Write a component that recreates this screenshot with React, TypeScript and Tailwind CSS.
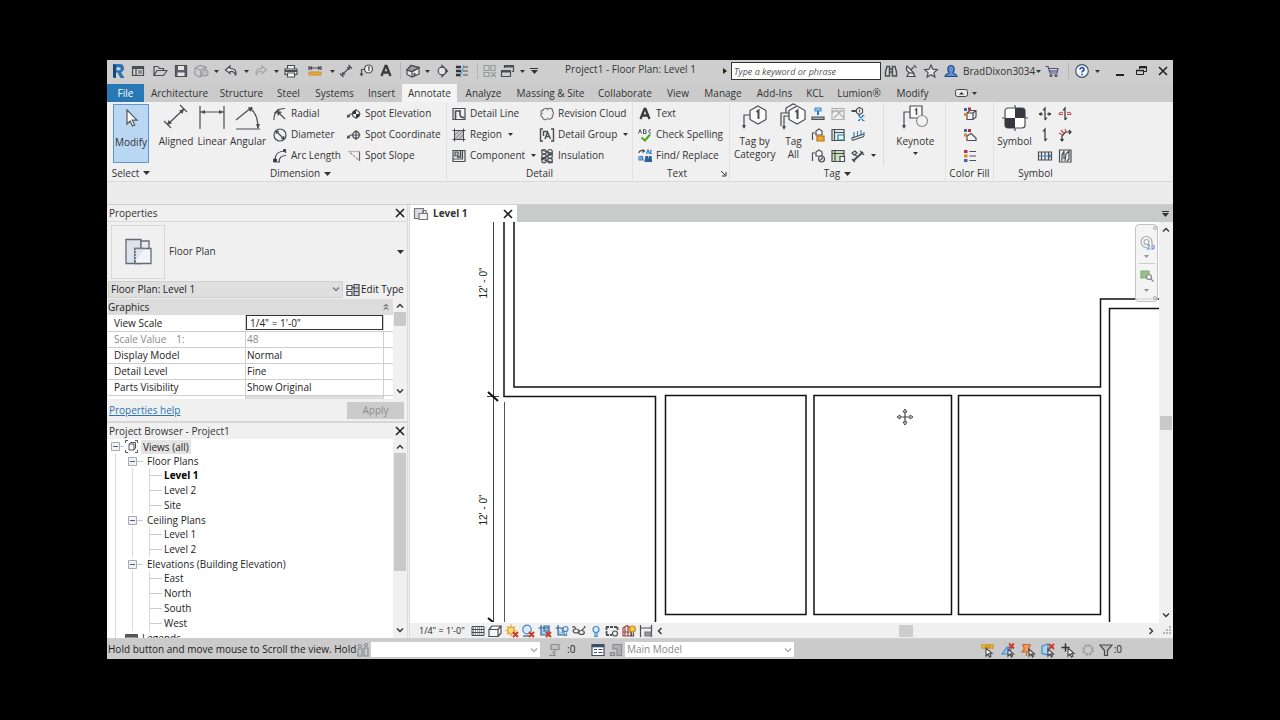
import { ReactNode, useState } from "react";
import clsx from "clsx";

type IconProps = { size?: number; className?: string; children: ReactNode };

const Icon = ({ size = 16, className, children }: IconProps) => (
  <svg
    width={size}
    height={size}
    viewBox={`0 0 ${size} ${size}`}
    fill="none"
    stroke="#4a4d52"
    strokeWidth={1.2}
    aria-hidden="true"
    className={clsx("shrink-0", className)}
  >
    {children}
  </svg>
);

const Caret = ({ big = false }: { big?: boolean }) => (
  <svg width={big ? 7 : 5} height={big ? 4 : 3} viewBox="0 0 6 3" preserveAspectRatio="none" aria-hidden="true" className="shrink-0">
    <path d="M0 0h6L3 3z" fill="#333" />
  </svg>
);

const Chevron = ({ dir, stroke = "#333" }: { dir: "up" | "down" | "left" | "right"; stroke?: string }) => {
  const paths = {
    up: "M1 5.5l3-3 3 3",
    down: "M1 2.5l3 3 3-3",
    left: "M5.5 1l-3 3 3 3",
    right: "M2.5 1l3 3-3 3",
  };
  return (
    <svg width={8} height={8} viewBox="0 0 8 8" fill="none" stroke={stroke} strokeWidth={1.4} aria-hidden="true">
      <path d={paths[dir]} />
    </svg>
  );
};

const Cross = () => (
  <svg width={10} height={10} viewBox="0 0 10 10" stroke="#222" strokeWidth={1.6} aria-hidden="true">
    <path d="M1 1l8 8M9 1L1 9" />
  </svg>
);

const icons: Record<string, ReactNode> = {
  logo: (
    <Icon>
      <path d="M3 1h6.500a4.200 4.200 0 0 1 1.500 8.200L14.500 15h-4L7.500 9.500H6V15H3z" fill="#2a73b4" stroke="none" />
      <path d="M3 1l3 1.500V15L3 13.500z" fill="#16487e" stroke="none" />
      <path d="M6.500 4.300h2.700a1.500 1.500 0 0 1 0 3H6.500z" fill="#cfd6dc" stroke="none" />
    </Icon>
  ),
  window: (
    <Icon>
      <path d="M2.500 3.500h11v9h-11zM2.500 5.500h11M6 5.500v7M8 8h4M8 10h4" />
      <path d="M3 4.500h10" strokeWidth={2} />
    </Icon>
  ),
  open: (
    <Icon>
      <path d="M2 12.500v-9h4l1.500 2h4v2M2 12.500l3-5h10l-3.500 5z" />
    </Icon>
  ),
  save: (
    <Icon>
      <path d="M2.500 2.500h11v11h-11z" fill="#5b6069" />
      <path d="M5 3h6v4H5zM4.500 9.500h7V13h-7z" fill="#e6e6e6" stroke="none" />
    </Icon>
  ),
  sync: (
    <Icon className="opacity-40">
      <path d="M2 5l5-2.500L13 4v7l-6 3-5-2.500zM2 5l5.500 2L13 4M7.500 7v7" fill="#d2d2d2" />
      <circle cx="12" cy="10" r="3" fill="#aaa" />
    </Icon>
  ),
  undo: (
    <Icon>
      <path d="M7 3L2.500 7 7 10.500V8.500c3.500-.5 5 .5 5.500 4 1.500-4 0-7-5.500-7z" fill="#e8e8e8" />
    </Icon>
  ),
  redo: (
    <Icon className="opacity-30">
      <path d="M9 3l4.500 4L9 10.500V8.500c-3.500-.5-5 .5-5.500 4-1.500-4 0-7 5.500-7z" />
    </Icon>
  ),
  print: (
    <Icon>
      <path d="M4.500 6V2.500h7V6M2 6h12v5.500H2z" fill="#eee" />
      <path d="M2 8h12" strokeWidth={2} />
      <path d="M4.500 10h7v4h-7z" fill="#fff" />
    </Icon>
  ),
  measure: (
    <Icon>
      <path d="M2 5h12M2 3v4M14 3v4M5 3.500L3 5l2 1.500M11 3.500L13 5l-2 1.500" />
      <path d="M2 9h12v3H2z" fill="#e8ac3b" stroke="#c58718" strokeWidth={0.8} />
    </Icon>
  ),
  dim: (
    <Icon>
      <path d="M4 12l8-8M2 10.500l3.500 3.500M10.500 2L14 5.500" />
      <path d="M4 12l.5-3 2.500 2.500zM12 4l-3 .5L11.500 7z" fill="#4a4d52" strokeWidth={0.5} />
    </Icon>
  ),
  tag: (
    <Icon>
      <circle cx="10.500" cy="6" r="4" fill="#eee" />
      <path d="M10 4.500l1-.5v4M6.500 6.500h-3v6M2 10.500l1.500 2 1.500-2" />
    </Icon>
  ),
  text: (
    <Icon>
      <path d="M3.500 13L7.500 3h1l4 10M5 9.500h6" strokeWidth={2.3} stroke="#3b3b3b" />
    </Icon>
  ),
  house: (
    <Icon>
      <path d="M2 7l4-4.500 8 2v6.500L7 14l-5-2.500zM2 7l5 1.500L14 5M7 8.500V14" fill="#e7e7e7" />
      <path d="M2 7l4-4.500 8 2L7 8.500z" fill="#9a9da3" />
      <path d="M9.500 10v3" strokeWidth={2} />
    </Icon>
  ),
  section: (
    <Icon>
      <path d="M8 2.500L13.500 8 8 13.500z" fill="#4a4d52" />
      <circle cx="8" cy="8" r="3.800" fill="#e4e4e4" />
    </Icon>
  ),
  thin: (
    <Icon>
      <path d="M2 4h5M2 8h5M2 12h5" strokeWidth={2.4} stroke="#333" />
      <path d="M9 4h5M9 8h5M9 12h5" />
      <path d="M10 2L6 14" stroke="#4a9ad4" />
    </Icon>
  ),
  closeHidden: (
    <Icon className="opacity-40">
      <path d="M2 2.500h5v5H2zM9 2.500h4v5H9zM2 9.500h5v4H2zM9 9l5 5M14 9l-5 5" />
    </Icon>
  ),
  switchWin: (
    <Icon>
      <path d="M4.500 5V2.500h9v6H12M1.500 7.500h9v6h-9z" />
      <path d="M1.500 8.500h9M4.500 3.500h9" strokeWidth={1.8} />
    </Icon>
  ),
  binoculars: (
    <Icon>
      <path d="M4 3.500h2.500V13h-4V9zM12 3.500H9.500V13h4V9zM6.500 6h3v3h-3z" fill="#d8d8d8" strokeWidth={1.5} />
    </Icon>
  ),
  dish: (
    <Icon>
      <path d="M4 3c-2 4 1 8 7 7zM8 6.500l3-2.500M10.500 2.500a2.500 2.500 0 0 1 2.500 2.500M6 9.500l-2 4h8l-2-3.500" fill="#e2e2e2" />
    </Icon>
  ),
  star: (
    <Icon>
      <path d="M8 2l1.800 4.200 4.500.4-3.400 3 1 4.400L8 11.700 4.100 14l1-4.400-3.400-3 4.500-.4z" fill="#e6e6e6" />
    </Icon>
  ),
  user: (
    <Icon>
      <path d="M2 13.500c0-3 4-2.500 4-4C4 7 4.500 2.500 8 2.500S12 7 10 9.500c0 1.500 4 1 4 4z" fill="#5d8fdd" stroke="#28457f" />
    </Icon>
  ),
  cart: (
    <Icon>
      <path d="M1.500 3.500H4L6 10h7l1-4.500H4.500" fill="#d5d8e4" stroke="#4d5576" />
      <circle cx="7" cy="12.500" r="1" />
      <circle cx="12" cy="12.500" r="1" />
      <path d="M6 8h7" stroke="#4d5576" />
    </Icon>
  ),
  help: (
    <Icon>
      <circle cx="8" cy="8" r="6.300" fill="#f6f8fc" stroke="#45536b" />
      <path d="M6 6.500c0-2.600 4-2.600 4 0 0 1.500-2 1.500-2 3M8 10.800v1.400" stroke="#2457b8" strokeWidth={1.7} />
    </Icon>
  ),
  radial: (
    <Icon>
      <path d="M2 14C1.500 7 6 2.500 13 2.500M5.500 5.500L13 13" />
      <path d="M5 5l1 4.500L9.500 6z" fill="#4a4d52" strokeWidth={0.5} />
      <path d="M2.500 7.500L7 3" strokeWidth={1.6} />
    </Icon>
  ),
  diameter: (
    <Icon>
      <circle cx="8" cy="8" r="6" />
      <path d="M4 4l8 8" />
      <path d="M4 4v3l3-3zM12 12V9l-3 3z" fill="#4a4d52" strokeWidth={0.5} />
    </Icon>
  ),
  arc: (
    <Icon>
      <path d="M3 12C3 6.500 6.500 3 13 3M7 14c0-4 2.500-6.500 7-6.500M8 14H5M13.500 1v4" />
      <path d="M1.500 11h3v3h-3zM11.500 1.500h2v2h-2z" fill="#333" strokeWidth={1} />
    </Icon>
  ),
  spotElev: (
    <Icon>
      <path d="M1.500 11l3-3h10M2 8.500L1.500 11l2.500-.5M10 3v10" />
      <circle cx="10" cy="8" r="3.500" fill="#fff" />
      <path d="M10 8V4.500A3.500 3.500 0 0 0 6.500 8zM10 8v3.500A3.500 3.500 0 0 0 13.500 8z" fill="#333" stroke="none" />
    </Icon>
  ),
  spotCoord: (
    <Icon>
      <path d="M1.500 11l3-3h10M2 8.500L1.500 11l2.500-.5M10 3v10" />
      <circle cx="10" cy="8" r="3.300" />
    </Icon>
  ),
  spotSlope: (
    <Icon>
      <path d="M2 3.500h11.500" stroke="#b5b5b5" />
      <path d="M13.500 3.500v9.500" stroke="#666" />
      <path d="M4 4.500l9 8" stroke="#999" strokeDasharray="3 1" />
    </Icon>
  ),
  detailLine: (
    <Icon>
      <path d="M2 2.500h12v11H2z" />
      <path d="M4.500 4.500v9M4.500 5h4M9 4v4c0 2 1 4 4.500 3.500" strokeWidth={1.6} />
    </Icon>
  ),
  region: (
    <Icon>
      <path d="M3.500 4h9v8h-9z" fill="#c6c6c6" stroke="none" />
      <path d="M3.500 1.500v13M12.500 1.500v13M1.500 3.500h13M1.500 12.500h13" strokeWidth={1} />
      <path d="M4 8l4-4M4 12l8-8M8 12l4-4" stroke="#8a8a8a" strokeWidth={1} />
    </Icon>
  ),
  component: (
    <Icon>
      <path d="M2 2.500h12v11H2zM2 11h9.500V3" />
      <path d="M4 4h3v4H4z" fill="#ccc" />
      <path d="M9.500 3v6H6" strokeWidth={1.6} />
    </Icon>
  ),
  cloud: (
    <Icon>
      <path d="M4 4.500C4 2 8 2 8.500 3.500 10 1.500 14 2 13.500 5c1.500 1.500 1 4 0 4.500.5 3-3 4.500-5 3C7 14.500 3.500 14 3.500 11 1 10.500 1.500 8 3 7.500 1 6.500 2 4 4 4.500z" stroke="#777" />
    </Icon>
  ),
  group: (
    <Icon>
      <path d="M4 2H1.500v12H4M12 2h2.500v12H12M4.500 9V4.500H8M6 12l2.500-7 3 7M7 9.500h3.500" strokeWidth={1.4} />
    </Icon>
  ),
  insulation: (
    <Icon>
      <circle cx="5" cy="3.800" r="2.300" />
      <circle cx="11" cy="3.800" r="2.300" />
      <circle cx="5" cy="8.300" r="2.300" />
      <circle cx="11" cy="8.300" r="2.300" />
      <circle cx="5" cy="12.500" r="2.300" />
      <circle cx="11" cy="12.500" r="2.300" />
      <path d="M2 2l12 3.500M2 10.500L14 6M2 11l12 3.500" />
    </Icon>
  ),
  spelling: (
    <Icon>
      <path d="M1.500 6.500l1.500-4 1.500 4M6.500 2.500v4H9c1.500-2-2.500-2 0-2 1-2-2.500-2-2.500-2M14 3c-3-1.500-3 4 0 3" strokeWidth={1} />
      <path d="M4.500 10.500L8 13.500l5-6" stroke="#53a52c" strokeWidth={2} />
    </Icon>
  ),
  find: (
    <Icon>
      <path d="M2 5c0-2 2-3 5-2M5.500 1.500l2 1.500-2 1.500" />
      <path d="M9.500 6l1.500-4 1.500 4M15 2.500h-1.500v3H15M2 12V9l2-.5V12zM5.500 8v4h1.500" stroke="#3e80c4" />
      <path d="M9 8.500h1.500l.5 5H8zM12.500 8.500H14l.5 5h-3z" fill="#31619b" stroke="#31619b" />
    </Icon>
  ),
  tagPin: (
    <Icon>
      <path d="M5 2h6v3H5z" fill="#8cc4ef" stroke="#4b93ca" />
      <path d="M8 5v4" stroke="#2b77ba" strokeWidth={2} />
      <path d="M2 11h12v2.500H2z" fill="#aaa" />
    </Icon>
  ),
  tagOff: (
    <Icon className="opacity-40">
      <path d="M2 2.500h12v11H2zM2 7l4-3 8 8M4 12l8-8M2 5h12" />
    </Icon>
  ),
  tagLoad: (
    <Icon>
      <path d="M1.500 5H6" strokeWidth={2} />
      <path d="M9.500 1.500l3 1.800v3.400l-3 1.800-3-1.800V3.300z" fill="#fff" />
      <path d="M9.500 3.500v3" />
      <path d="M9 10l4 4M13 10l-4 4M8 9.500h2M12 9.500h2.500M8 14.500h2M12 14.500h2.500" stroke="#2c86cc" />
    </Icon>
  ),
  tagMulti: (
    <Icon>
      <path d="M5 6H2.500v7M9 2l3 2v4H6V4z" fill="#fff" />
      <path d="M7 9h7v5H7z" fill="#f0a534" stroke="#b87617" />
    </Icon>
  ),
  tagWin: (
    <Icon>
      <path d="M2 2.500h12v11H2zM4.500 2.500v11M5 5.500h9" fill="#e1eeee" />
      <path d="M8 8h6v5H8z" fill="#fff" stroke="#237899" />
    </Icon>
  ),
  tagBars: (
    <Icon>
      <path d="M4 11V5M7.500 9.500V4M11 8V3M2 13v-3M14 9V5" stroke="#4a7eb8" />
      <path d="M2 13.500L14 9.500M2 11l12-4" />
    </Icon>
  ),
  tagCircle: (
    <Icon>
      <path d="M5 5H2.500v8M9 2l3 2v4H6V4z" fill="#fff" />
      <circle cx="11.500" cy="11" r="3" fill="#eee" />
      <path d="M10 12.500l3-3" />
    </Icon>
  ),
  tagRoom: (
    <Icon>
      <path d="M2 2.500h12v11H2zM5 2.500v11M2 5.500h12" fill="#cbe1b7" />
      <path d="M10 8.500h4.500v5H10z" fill="#fff" />
    </Icon>
  ),
  tagPath: (
    <Icon>
      <path d="M3 13L13 4" strokeWidth={2} />
      <path d="M2 5l3-2 2 2-3 2zM2 11l3 3M10 3l4 4M5 7l2 1" />
    </Icon>
  ),
  fillBox: (
    <Icon>
      <path d="M5 7l3-2.500h6V11l-3 2.500H5zM5 7h6v6.500M11 7l3-2.500" fill="#f3f3f3" />
      <path d="M2 2h3v3H2z" fill="#3a66b1" stroke="none" />
      <path d="M6 1.500h3v3H6z" fill="#b23148" stroke="none" />
      <path d="M2 7h3v3H2z" fill="#e48526" stroke="none" />
    </Icon>
  ),
  fillDuct: (
    <Icon>
      <path d="M5 9l4-2.500L14 11v2.500H5z" fill="#f3f3f3" />
      <path d="M2 2h3v3H2z" fill="#3a66b1" stroke="none" />
      <path d="M6 2h3v3H6z" fill="#b23148" stroke="none" />
      <path d="M2 6.500h3v3H2z" fill="#e48526" stroke="none" />
    </Icon>
  ),
  fillLegend: (
    <Icon>
      <path d="M7.500 3.500H14M7.500 8H14M7.500 12.500H14" />
      <path d="M2 2h3.500v3H2z" fill="#b23148" stroke="none" />
      <path d="M2 6.500h3.500v3H2z" fill="#e48526" stroke="none" />
      <path d="M2 11h3.500v3H2z" fill="#3a66b1" stroke="none" />
    </Icon>
  ),
  symSpan: (
    <Icon>
      <path d="M2 8h4M10 8h4M8 14V2L6 4.500M8 14l2-2.500" stroke="#333" />
      <path d="M4.500 6v4L1.500 8zM11.500 6v4l3-2z" fill="#333" stroke="none" />
    </Icon>
  ),
  symBeam: (
    <Icon>
      <path d="M8 14V2L6 4.500M8 14l2-2.500" stroke="#333" />
      <path d="M6 7c-2-1.500-4-.5-4 1.500M10 7c2-1.500 4-.5 4 1.500M2 8.500h4M10 8.500h4" stroke="#c94b50" />
    </Icon>
  ),
  symPath: (
    <Icon>
      <path d="M8 14V2L6 4.500M8 14l2-2.500" stroke="#333" />
    </Icon>
  ),
  symRebar: (
    <Icon>
      <path d="M5 14V9l3.500-4H14M12 3l2 2-2 2M3.500 12L5 14l1.500-2" stroke="#333" />
      <path d="M2 6l4 2M4 3l3 3.500M8 2l1 3" stroke="#c94b50" />
    </Icon>
  ),
  symFabric: (
    <Icon>
      <path d="M1.500 4h13v8h-13zM4.500 4v8M8 4v8M11.500 4v8" />
      <path d="M2 8h12M12 6.500L14 8l-2 1.500" stroke="#2d86b9" />
    </Icon>
  ),
  symSheet: (
    <Icon>
      <path d="M2.500 2h11.500v12H2.500zM5 13V7l2-4M8 13l1-7 3-3v8l-2 2M7 3v8" />
    </Icon>
  ),
  aligned: (
    <Icon size={28}>
      <path d="M5 22L22 6M2 18l7 7M18 2l7 7" />
      <path d="M5 22l1.500-5 3.500 3.500zM22 6l-1.500 5L17 7.500z" fill="#4a4d52" stroke="none" />
    </Icon>
  ),
  linear: (
    <Icon size={28}>
      <path d="M2 3v23M26 3v23M2 9h24" />
      <path d="M2.500 9L7 7v4zM25.500 9L21 7v4z" fill="#4a4d52" stroke="none" />
    </Icon>
  ),
  angular: (
    <Icon size={28}>
      <path d="M2 17L18 4M2 26h24M16 5c5 4 8 11 8 20" />
      <path d="M14 4l5 1-3 4zM24 26l-2-5h4z" fill="#4a4d52" stroke="none" />
    </Icon>
  ),
  tagCategory: (
    <Icon size={28}>
      <path d="M9 12H3v13" />
      <path d="M1 22h4l-2 4z" fill="#4a4d52" stroke="none" />
      <path d="M17 3l8 4.500v9L17 21l-8-4.500v-9z" fill="#fafafa" />
      <path d="M15.500 9l2-1.500V16" strokeWidth={2} />
    </Icon>
  ),
  tagAll: (
    <Icon size={28}>
      <path d="M10 10H2v13M11 13H5v12M17 2l-3-1-7 4v5" />
      <path d="M3 23h4l-2 4z" fill="#4a4d52" stroke="none" />
      <path d="M18 3l8 4.500v9L18 21l-8-4.500v-9z" fill="#fafafa" />
      <path d="M16.500 9l2-1.500V16" strokeWidth={2} />
    </Icon>
  ),
  keynote: (
    <Icon size={28}>
      <path d="M9 9H3v16" />
      <path d="M1 22h4l-2 4z" fill="#4a4d52" stroke="none" />
      <path d="M9 3h12v12H9z" fill="#fafafa" />
      <path d="M14 7l1.500-1v6" strokeWidth={1.5} />
      <circle cx="21" cy="18" r="5.500" fill="#f1f1f1" stroke="#8a8a8a" />
    </Icon>
  ),
  symbol: (
    <Icon size={28}>
      <path d="M14 2v26M1 15h26" />
      <rect x="4" y="5" width="20" height="20" rx="3" fill="#fff" />
      <path d="M14 5h7a3 3 0 0 1 3 3v7H14zM14 15v10H7a3 3 0 0 1-3-3v-7z" fill="#36393f" stroke="none" />
    </Icon>
  ),
  cursor: (
    <Icon size={24}>
      <path d="M8 5v14l3.200-3 2.300 5 2.200-1-2.300-4.800H18z" fill="#fff" stroke="#555" />
    </Icon>
  ),
  sheets: (
    <Icon>
      <path d="M1.500 2.500h9v10h-9z" fill="#d8dde5" stroke="#777" />
      <path d="M6 7.500h8.500v6H6z" fill="#f0f3f7" stroke="#777" />
      <path d="M10 7V4.500h3V7" stroke="#777" />
    </Icon>
  ),
  editType: (
    <Icon>
      <path d="M2 3.500h5v4H2zM2 9.500h5v4H2zM7 5.500h2" fill="#eef3f8" />
      <path d="M9 2.500h5v11H9zM9 6h5M9 9.500h5" fill="#c5d5e6" />
    </Icon>
  ),
  mesh: (
    <Icon>
      <path d="M2 3.500h12v9H2zM2 6.500h12M2 9.500h12" strokeWidth={1} />
      <path d="M3 5h10M3 8h10M3 11h10" strokeDasharray="1 1" strokeWidth={1.5} stroke="#888" />
    </Icon>
  ),
  box: (
    <Icon>
      <path d="M2 6.500h9v7H2zM2 6.500L5 3h9l-3 3.500M14 3v7l-3 3.500" fill="#f6f6f6" />
    </Icon>
  ),
  sun: (
    <Icon>
      <path d="M7 1.500v12M1.500 7.500h11M3 3.500l8 8M11 3.500l-8 8" stroke="#e0a42b" />
      <circle cx="7" cy="7.500" r="3.300" fill="#fbdc7a" stroke="#e0a42b" />
      <path d="M9 9l5 5M14 9l-5 5" stroke="#cc3929" strokeWidth={2} />
    </Icon>
  ),
  shadow: (
    <Icon>
      <circle cx="7" cy="6.500" r="4.300" fill="#d9ebf8" stroke="#4c88bd" />
      <path d="M3 13h6" />
      <path d="M9 9l5 5M14 9l-5 5" stroke="#cc3929" strokeWidth={2} />
    </Icon>
  ),
  crop: (
    <Icon>
      <path d="M4 2v10h9M1.500 5H12v5M7 3h5v5H7z" fill="#a9cbe8" stroke="#316799" />
      <path d="M9 9l5 5M14 9l-5 5" stroke="#cc3929" strokeWidth={2} />
    </Icon>
  ),
  cropShow: (
    <Icon>
      <path d="M4 2v10h6M1.500 5H9v5" fill="#a9cbe8" stroke="#316799" />
      <circle cx="11.500" cy="6" r="2.500" fill="#d9ebf8" stroke="#4c88bd" />
      <path d="M10.500 9.500v3h2v-3" stroke="#4c88bd" />
    </Icon>
  ),
  glasses: (
    <Icon>
      <path d="M1.500 4.500c1-2 3 0 3 1.500M11 7c2-2 3-2 3-4" />
      <ellipse cx="5" cy="8" rx="2.800" ry="2" />
      <ellipse cx="10.500" cy="9.500" rx="2.800" ry="2" />
    </Icon>
  ),
  bulb: (
    <Icon>
      <circle cx="8" cy="6.500" r="3" fill="#d9ebf8" stroke="#3b88c8" />
      <path d="M7 9.500v4h2v-4" stroke="#3b88c8" />
    </Icon>
  ),
  temp: (
    <Icon>
      <path d="M2 4h12M2 12h6M2.500 4v8M13.500 4v3" strokeWidth={1.8} strokeDasharray="3 1" />
      <circle cx="11" cy="10.500" r="2.500" />
    </Icon>
  ),
  analytic: (
    <Icon>
      <path d="M2 5l4-2.500L10 5v8H2zM4 3v10M7 3v10M2 9h8" stroke="#9a4a42" />
      <circle cx="11.500" cy="6" r="3" fill="#f6c845" stroke="#c58d1c" />
      <path d="M10.500 9.500V13h2V9.500" />
    </Icon>
  ),
  constraint: (
    <Icon>
      <path d="M2.500 2v12M13.500 2v12M2.500 5h11" />
      <path d="M7 9h6v4H7z" fill="#999" stroke="#777" />
    </Icon>
  ),
  people: (
    <Icon className="opacity-50">
      <path d="M3 7h4v7H3zM9 6h4v8H9z" fill="#c5c5c5" />
      <circle cx="5" cy="4" r="1.500" />
      <circle cx="11" cy="3" r="1.500" />
    </Icon>
  ),
  press: (
    <Icon className="opacity-50">
      <path d="M5 2.500h8v5H5zM9 7.500v3M3 13.500h6l-2-4" fill="#bbb" />
    </Icon>
  ),
  dialog: (
    <Icon>
      <path d="M2 2.500h12v11H2z" fill="#fff" />
      <path d="M2 4h12" strokeWidth={2.6} stroke="#345071" />
      <path d="M4 7.500h3M4 10.500h3M8.500 7.500h4M8.500 10.500h4" stroke="#345071" />
    </Icon>
  ),
  option: (
    <Icon className="opacity-50">
      <path d="M5 2.500h8.500v11H9V7H5zM2.500 10.500h4v3h-4z" fill="#999" />
    </Icon>
  ),
  selLinks: (
    <Icon>
      <path d="M2 3h5v3H2zM8 3h5v3H8zM5 4.500h6" stroke="#d99d1b" strokeWidth={1.5} />
      <path d="M6 6v8l2-2 1.500 3 1.500-1-1.500-2.500H12z" fill="#fff" />
    </Icon>
  ),
  selUnder: (
    <Icon>
      <path d="M2 12l5-7h5l-3 7zM2 12h6" fill="#9fcdec" stroke="#3b88c8" />
      <path d="M9 1.500l5 5M14 1.500l-5 5" stroke="#cc3929" strokeWidth={1.8} />
      <path d="M8 7v7l2-2 1.500 3 1-1-1-2h2z" fill="#fff" />
    </Icon>
  ),
  selPin: (
    <Icon>
      <path d="M3 2.500h7v2L9 5v3l2 2H2l2-2V5l-1-.5zM6.500 10v4" fill="#ed9d61" stroke="#c76a27" />
      <path d="M9 7v7l2-2 1.500 3 1-1-1-2h2z" fill="#fff" />
    </Icon>
  ),
  selFace: (
    <Icon>
      <path d="M2 4l6-2v11l-6-1.500z" fill="#aad3ee" stroke="#3b88c8" />
      <path d="M9 2l5 5M14 2L9 7" stroke="#cc3929" strokeWidth={1.8} />
      <path d="M8 7v7l2-2 1.500 3 1-1-1-2h2z" fill="#fff" />
    </Icon>
  ),
  selDrag: (
    <Icon>
      <path d="M5.500 1.500v8M1.500 5.500h8" stroke="#333" strokeWidth={1.5} />
      <path d="M8 6v8l2-2 1.500 3 1.500-1-1.500-2.500H14z" fill="#fff" />
    </Icon>
  ),
  ring: (
    <Icon>
      <circle cx="8" cy="8" r="4.500" stroke="#9d9d9d" strokeWidth={2.4} strokeDasharray="2.5 1" />
    </Icon>
  ),
  filter: (
    <Icon>
      <path d="M2 3h12l-4.500 5.500v5h-3v-5z" fill="#bbb" />
    </Icon>
  ),
};

// quick access toolbar, left to right
const quickAccess: [string, string][] = [
  ["logo", "w-5"],
  ["window", "w-5"],
  ["open", "w-6"],
  ["save", "w-[18px]"],
  ["sync", "w-[22px]"],
  ["caret", "w-2"],
  ["undo", "w-[22px]"],
  ["caret", "w-2"],
  ["redo", "w-[22px]"],
  ["caret", "w-2"],
  ["print", "w-[22px]"],
  ["measure", "w-[26px]"],
  ["caret", "w-2"],
  ["dim", "w-5"],
  ["tag", "w-5"],
  ["text", "w-5"],
  ["rule", "w-2"],
  ["house", "w-[18px]"],
  ["caret", "w-[10px]"],
  ["section", "w-5"],
  ["thin", "w-5"],
  ["rule", "w-[10px]"],
  ["closeHidden", "w-4"],
  ["switchWin", "w-5"],
  ["caret", "w-2"],
];

const tabs: [string, string][] = [
  ["Architecture", "w-[69px]"],
  ["Structure", "w-[55px]"],
  ["Steel", "w-[39px]"],
  ["Systems", "w-[53px]"],
  ["Insert", "w-[41px]"],
  ["Annotate", "w-[55px]"],
  ["Analyze", "w-[53px]"],
  ["Massing & Site", "w-[81px]"],
  ["Collaborate", "w-[68px]"],
  ["View", "w-[38px]"],
  ["Manage", "w-[52px]"],
  ["Add-Ins", "w-[51px]"],
  ["KCL", "w-[30px]"],
  ["Lumion®", "w-[58px]"],
  ["Modify", "w-[49px]"],
];

const properties = [
  { name: "Display Model", value: "Normal" },
  { name: "Detail Level", value: "Fine" },
  { name: "Parts Visibility", value: "Show Original" },
];

const views = [
  { title: "Floor Plans", items: ["Level 1", "Level 2", "Site"] },
  { title: "Ceiling Plans", items: ["Level 1", "Level 2"] },
  { title: "Elevations (Building Elevation)", items: ["East", "North", "South", "West"] },
];

const viewControls = ["mesh", "box", "sun", "shadow", "crop", "cropShow", "glasses", "bulb", "temp", "analytic", "constraint"];

const selectionTools = ["selLinks", "selUnder", "selPin", "selFace", "selDrag", "ring"];

const Rule = () => <span className="h-4 w-px bg-[#b5b5b5]" />;

const SmallButton = ({ icon, label, caret = false }: { icon: string; label: string; caret?: boolean }) => (
  <button type="button" className="flex h-[21px] items-center whitespace-nowrap">
    {icons[icon]}
    <span className="ml-[3px]">{label}</span>
    {caret && (
      <span className="ml-[6px]">
        <Caret />
      </span>
    )}
  </button>
);

const LargeButton = ({ icon, label, caret = false, className }: { icon: string; label: string; caret?: boolean; className: string }) => (
  <button type="button" className={clsx("flex flex-col items-center", className)}>
    {icons[icon]}
    <span className="mt-1 leading-[13px]">{label}</span>
    {caret && (
      <span className="mt-1">
        <Caret />
      </span>
    )}
  </button>
);

const IconButton = ({ icon, className = "h-[21px] w-5" }: { icon: string; className?: string }) => (
  <button type="button" aria-label={icon} className={clsx("flex items-center justify-center", className)}>
    {icons[icon]}
  </button>
);

type PanelProps = { title: string; caret?: boolean; launcher?: boolean; last?: boolean; className: string; children: ReactNode };

const Panel = ({ title, caret = false, launcher = false, last = false, className, children }: PanelProps) => (
  <section className={clsx("flex shrink-0 flex-col", !last && "border-r border-[#e2e2e2]", className)}>
    <div className="flex h-[63px]">{children}</div>
    <div className="flex h-4 items-center">
      <h2 className="flex flex-1 items-center justify-center gap-1 whitespace-nowrap">
        {title}
        {caret && <Caret big />}
      </h2>
      {launcher && (
        <button type="button" aria-label={`${title} settings`} className="w-2">
          <svg width={6} height={6} viewBox="0 0 6 6" fill="none" stroke="#333" aria-hidden="true">
            <path d="M0 0l4 4M5 1v4H1" />
          </svg>
        </button>
      )}
    </div>
  </section>
);

const TitleBar = () => (
  <header className="flex h-6 items-center bg-[#cecece] pb-[2px] pl-px">
    {quickAccess.map(([icon, width], index) => {
      if (icon === "rule")
        return (
          <span key={index} className={clsx("flex shrink-0 justify-center", width)}>
            <Rule />
          </span>
        );
      return (
        <button key={index} type="button" aria-label={icon} className={clsx("flex shrink-0 items-center justify-center", width)}>
          {icon === "caret" ? <Caret /> : icons[icon]}
        </button>
      );
    })}
    <button type="button" aria-label="Customize toolbar" className="flex w-4 flex-col items-center gap-px">
      <span className="h-px w-2 bg-[#333]" />
      <Caret big />
    </button>
    <h1 className="flex-1 pb-1 text-center leading-4">Project1 - Floor Plan: Level 1</h1>
    <span className="flex w-3 justify-center">
      <svg width={4} height={6} viewBox="0 0 4 6" aria-hidden="true">
        <path d="M0 0l4 3-4 3z" fill="#222" />
      </svg>
    </span>
    <input
      aria-label="Search"
      placeholder="Type a keyword or phrase"
      className="h-[18px] w-[150px] border border-[#333] bg-white px-[2px] text-[9px] italic outline-none placeholder:text-[#555]"
    />
    <IconButton icon="binoculars" />
    <IconButton icon="dish" />
    <IconButton icon="star" />
    <button type="button" className="flex items-center">
      <span className="flex w-5 justify-center">{icons.user}</span>
      <span className="w-[75px] pl-[2px] text-left">BradDixon3034</span>
      <Caret />
    </button>
    <IconButton icon="cart" className="w-[22px]" />
    <span className="flex w-[10px] justify-center">
      <Rule />
    </span>
    <IconButton icon="help" className="w-[18px]" />
    <span className="mr-[6px] flex w-3 justify-center">
      <Caret />
    </span>
    <button type="button" aria-label="Minimize" className="flex w-[22px] justify-center pt-2">
      <span className="h-[2px] w-2 bg-[#222]" />
    </button>
    <button type="button" aria-label="Restore" className="flex w-[21px] justify-center">
      <svg width={11} height={10} viewBox="0 0 11 10" fill="none" stroke="#222" aria-hidden="true">
        <path d="M3.500 3V.5h7v5H8M.5 4.500h7v4h-7z" />
        <path d="M3 1.500h8M0 4.500h8" strokeWidth={1.5} />
      </svg>
    </button>
    <button type="button" aria-label="Close" className="flex w-[21px] justify-center">
      <Cross />
    </button>
  </header>
);

const RibbonTabs = ({ active, onSelect }: { active: string; onSelect: (tab: string) => void }) => (
  <nav className="flex h-[18px] items-stretch bg-[#cbcbcb]">
    <button type="button" className="mr-px w-[37px] bg-[#2878b5] text-white">
      File
    </button>
    {tabs.map(([tab, width]) => (
      <button
        key={tab}
        type="button"
        onClick={() => onSelect(tab)}
        className={clsx("shrink-0 whitespace-nowrap text-center", width, tab === active && "bg-[#f4f4f4]")}
      >
        {tab}
      </button>
    ))}
    <button type="button" aria-label="Minimize ribbon" className="ml-[18px] flex items-center gap-1">
      <svg width={13} height={8} viewBox="0 0 13 8" fill="none" stroke="#444" aria-hidden="true">
        <rect x=".5" y=".5" width="12" height="7" rx="2" fill="#e8e8e8" />
        <path d="M4 5.500L6.500 3 9 5.500z" fill="#333" stroke="none" />
      </svg>
      <Caret />
    </button>
  </nav>
);

const Ribbon = () => (
  <div className="flex h-20 overflow-hidden border-b border-[#d9d9d9] bg-[#f0f0f0] pt-px">
    <Panel title="Select" caret last className="w-12">
      <button type="button" className="ml-[6px] mt-px flex h-[59px] w-9 shrink-0 flex-col items-center border border-[#5c97cf] bg-[#b9d6f2]">
        {icons.cursor}
        <span className="mt-[6px] leading-[15px]">Modify</span>
      </button>
    </Panel>
    <Panel title="Dimension" caret className="w-[292px]">
      <LargeButton icon="aligned" label="Aligned" className="ml-px w-10" />
      <LargeButton icon="linear" label="Linear" className="w-8" />
      <LargeButton icon="angular" label="Angular" className="w-10" />
      <div className="ml-1 w-[74px]">
        <SmallButton icon="radial" label="Radial" />
        <SmallButton icon="diameter" label="Diameter" />
        <SmallButton icon="arc" label="Arc Length" />
      </div>
      <div>
        <SmallButton icon="spotElev" label="Spot Elevation" />
        <SmallButton icon="spotCoord" label="Spot Coordinate" />
        <SmallButton icon="spotSlope" label="Spot Slope" />
      </div>
    </Panel>
    <Panel title="Detail" className="w-[186px]">
      <div className="ml-1 w-[88px]">
        <SmallButton icon="detailLine" label="Detail Line" />
        <SmallButton icon="region" label="Region" caret />
        <SmallButton icon="component" label="Component" caret />
      </div>
      <div>
        <SmallButton icon="cloud" label="Revision Cloud" />
        <SmallButton icon="group" label="Detail Group" caret />
        <SmallButton icon="insulation" label="Insulation" />
      </div>
    </Panel>
    <Panel title="Text" launcher className="w-[97px]">
      <div className="ml-1">
        <SmallButton icon="text" label="Text" />
        <SmallButton icon="spelling" label="Check Spelling" />
        <SmallButton icon="find" label="Find/ Replace" />
      </div>
    </Panel>
    <Panel title="Tag" caret className="w-[216px]">
      <LargeButton icon="tagCategory" label="Tag by Category" className="w-[50px]" />
      <LargeButton icon="tagAll" label="Tag All" className="w-7" />
      <div className="ml-px grid grid-cols-3">
        <IconButton icon="tagPin" />
        <IconButton icon="tagOff" />
        <IconButton icon="tagLoad" />
        <IconButton icon="tagMulti" />
        <IconButton icon="tagWin" />
        <IconButton icon="tagBars" />
        <IconButton icon="tagCircle" />
        <IconButton icon="tagRoom" />
        <IconButton icon="tagPath" />
      </div>
      <span className="flex w-4 items-end border-r border-[#dcdcdc] pb-[9px] pl-[3px]">
        <Caret />
      </span>
      <LargeButton icon="keynote" label="Keynote" caret className="ml-[2px] w-[60px]" />
    </Panel>
    <Panel title="Color Fill" className="w-12">
      <div className="mx-auto">
        <IconButton icon="fillBox" />
        <IconButton icon="fillDuct" />
        <IconButton icon="fillLegend" />
      </div>
    </Panel>
    <Panel title="Symbol" last className="w-[83px]">
      <LargeButton icon="symbol" label="Symbol" className="w-[41px]" />
      <div className="grid grid-cols-2">
        <IconButton icon="symSpan" />
        <IconButton icon="symBeam" />
        <IconButton icon="symPath" />
        <IconButton icon="symRebar" />
        <IconButton icon="symFabric" />
        <IconButton icon="symSheet" />
      </div>
    </Panel>
  </div>
);

const PanelHeader = ({ title }: { title: string }) => (
  <div className="flex h-4 shrink-0 items-center justify-between px-[2px]">
    <h2>{title}</h2>
    <button type="button" aria-label={`Close ${title}`}>
      <Cross />
    </button>
  </div>
);

const VerticalScroll = ({ className }: { className: string }) => (
  <div className="flex w-[14px] shrink-0 flex-col items-center bg-[#f0f0f0] py-1">
    <Chevron dir="up" />
    <div className={clsx("w-3 bg-[#c9c9c9]", className)} />
    <div className="mt-auto">
      <Chevron dir="down" />
    </div>
  </div>
);

const PropertiesPanel = () => (
  <section className="flex h-[218px] shrink-0 flex-col border-b-2 border-[#d6d6d6]">
    <PanelHeader title="Properties" />
    <div className="flex h-[60px] items-center border-t border-[#dadada] pl-1 pr-[3px]">
      <div className="flex h-[54px] w-[54px] items-center justify-center border border-[#d8d8d8]">
        <svg width={28} height={28} viewBox="0 0 28 28" fill="#dbe3ee" stroke="#666b73" strokeWidth={1.3} aria-hidden="true">
          <path d="M2 1.500h15v24H2z" />
          <path d="M17 3h8v8h-8z" fill="#e9edf3" />
          <path d="M11 10.500h16v15H11z" fill="#f1f5fa" />
          <path d="M11 24V10.500h10" strokeWidth={1.6} strokeDasharray="2 1" />
        </svg>
      </div>
      <span className="ml-1 flex-1">Floor Plan</span>
      <Caret big />
    </div>
    <div className="flex h-[17px] items-center">
      <div className="relative ml-px w-[235px]">
        <select aria-label="View" className="block h-[17px] w-full appearance-none border border-[#cfcfcf] bg-[#dfdfdf] px-[2px] text-[#222]">
          <option>Floor Plan: Level 1</option>
        </select>
        <span className="pointer-events-none absolute right-[3px] top-1">
          <Chevron dir="down" stroke="#777" />
        </span>
      </div>
      <button type="button" className="ml-[2px] flex items-center whitespace-nowrap text-[#222]">
        {icons.editType}
        Edit Type
      </button>
    </div>
    <div className="flex h-[101px] overflow-hidden">
      <table className="ml-px mt-px w-[285px] table-fixed border-collapse self-start bg-white text-[#222]">
        <thead>
          <tr className="h-4 bg-[#dcdcdc]">
            <th colSpan={2} className="p-0 text-left font-normal leading-[15px]">
              Graphics
            </th>
            <th className="w-[10px] p-0">
              <svg width={6} height={8} viewBox="0 0 6 8" fill="none" stroke="#222" aria-hidden="true">
                <path d="M1 3.500l2-2 2 2M1 6.500l2-2 2 2" />
              </svg>
            </th>
          </tr>
        </thead>
        <tbody>
          <tr className="h-4 border-b border-[#cfcfcf]">
            <td className="w-[138px] border-r border-[#cfcfcf] p-0 pl-[6px] leading-[14px]">
              <label htmlFor="scale">View Scale</label>
            </td>
            <td className="border-r border-[#cfcfcf] p-0">
              <input id="scale" defaultValue={`1/4" = 1'-0"`} className="block h-[15px] w-full border border-[#333] bg-white px-[3px] leading-[13px] outline-none" />
            </td>
            <td className="p-0" />
          </tr>
          <tr className="h-4 border-b border-[#cfcfcf] text-[#8a8a8a]">
            <td className="border-r border-[#cfcfcf] p-0 pl-[6px] leading-[14px]">
              <span className="mr-[10px]">Scale Value</span>1:
            </td>
            <td className="border-r border-[#cfcfcf] p-0 pl-px leading-[14px]">48</td>
            <td className="p-0" />
          </tr>
          {properties.map(({ name, value }) => (
            <tr key={name} className="h-4 border-b border-[#cfcfcf]">
              <td className="border-r border-[#cfcfcf] p-0 pl-[6px] leading-[14px]">{name}</td>
              <td className="border-r border-[#cfcfcf] p-0 pl-px leading-[14px]">{value}</td>
              <td className="p-0" />
            </tr>
          ))}
          <tr className="h-4">
            <td className="border-r border-[#cfcfcf] p-0" />
            <td className="border-r border-[#cfcfcf] bg-[#dedede] p-0" />
            <td className="p-0" />
          </tr>
        </tbody>
      </table>
      <VerticalScroll className="mt-[2px] h-[14px]" />
    </div>
    <div className="flex flex-1 items-center justify-between pl-[2px] pr-[3px]">
      <a href="#help" className="text-[#2b73b5] underline">
        Properties help
      </a>
      <button type="button" disabled className="h-[17px] w-[57px] bg-[#cbcbcb] text-[#8d8d8d]">
        Apply
      </button>
    </div>
  </section>
);

const Expander = () => (
  <svg width={9} height={9} viewBox="0 0 9 9" fill="#f2f2f2" stroke="#a5a9b3" aria-hidden="true" className="shrink-0">
    <path d="M.5.5h8v8h-8z" />
    <path d="M2 4.500h5" stroke="#4e5f86" />
  </svg>
);

const ProjectBrowser = () => (
  <section className="flex min-h-0 flex-1 flex-col">
    <PanelHeader title="Project Browser - Project1" />
    <div className="flex min-h-0 flex-1 bg-white text-[#222]">
      <div className="min-w-0 flex-1 overflow-hidden">
        <div className="flex h-[15px] items-center pl-1">
          <Expander />
          <span className="h-px w-1 bg-[#ccc]" />
          <svg width={15} height={13} viewBox="0 0 15 13" fill="none" stroke="#555" aria-hidden="true" className="mr-[2px]">
            <path d="M4 .5H1.500V3M11 .5h2.500V3M4 12.500H1.500V10M11 12.500h2.500V10M5 4h5v6H5zM5 4l1.500-1.500h5V8L10 10" />
          </svg>
          <span className="bg-[#e3e3e3] px-[2px] leading-[14px]">Views (all)</span>
        </div>
        <div className="ml-2 border-l border-[#d8d8d8] pl-[12px]">
          {views.map(({ title, items }) => (
            <div key={title}>
              <div className="flex h-[14px] items-center">
                <Expander />
                <span className="mr-1 h-px w-[6px] bg-[#ccc]" />
                {title}
              </div>
              <ul className="ml-1 border-l border-[#d8d8d8] pl-4">
                {items.map((item) => (
                  <li key={item} className="flex h-[15px] items-center border-l border-[#d8d8d8]">
                    <span className="mr-[2px] h-px w-3 bg-[#ccc]" />
                    <span className={clsx(title === "Floor Plans" && item === "Level 1" && "font-bold text-black")}>{item}</span>
                  </li>
                ))}
              </ul>
            </div>
          ))}
          <div className="flex h-[15px] items-center">
            <svg width={13} height={10} viewBox="0 0 13 10" fill="#ddd" stroke="#555" aria-hidden="true" className="-ml-[3px] mr-1">
              <path d="M.5.5h12v9H.5z" />
              <path d="M1 2h11" strokeWidth={3} />
            </svg>
            Legends
          </div>
        </div>
      </div>
      <VerticalScroll className="mt-[2px] h-[118px]" />
    </div>
  </section>
);

const FloorPlan = () => (
  <svg width={749} height={400} viewBox="0 0 749 400" fill="none" stroke="#111" strokeWidth={1.5} role="img" aria-label="Level 1 floor plan" className="absolute left-0 top-0">
    <path d="M83.500 0v400" stroke="#444" strokeWidth={1} />
    <path d="M94.500 180v220" stroke="#555" strokeWidth={1} />
    <path d="M94 0v174.500h151.500V400M104 0v165h586.500V77H749M749 86.500h-49.500V400" />
    <path d="M255.500 173.500h140.500v219H255.500zM404 173.500h137.500v219H404zM548.500 173.500h142v219h-142z" />
    <path d="M77 174.500h12" stroke="#444" strokeWidth={1} />
    <path d="M78 170l10 9M78 396l5 4" stroke="#111" strokeWidth={2} />
    <g fill="#222" stroke="none" fontSize={10} textAnchor="middle" className="font-['Liberation_Sans',sans-serif]">
      <text transform="translate(77 61) rotate(-90)">12' - 0"</text>
      <text transform="translate(77 288) rotate(-90)">12' - 0"</text>
    </g>
    <g stroke="#444" strokeWidth={1.2}>
      <path d="M495 188v14M488 195h14" />
      <path d="M493 190l2-3 2 3zM493 200l2 3 2-3zM490 193l-3 2 3 2zM500 193l3 2-3 2z" fill="#fff" strokeWidth={1} />
    </g>
  </svg>
);

const NavigationBar = () => (
  <div className="absolute right-px top-[2px] flex h-[78px] w-[23px] flex-col items-center justify-between rounded-[4px] border border-[#c4c4c4] bg-[#f3f3f3]/90 py-px">
    <span className="h-1 w-1 self-end rounded-full border border-[#aaa]" />
    <button type="button" aria-label="Steering wheel">
      <Icon className="opacity-80">
        <path d="M13 9V7a5.500 5.500 0 1 0-5.500 5.500H8" stroke="#999" />
        <circle cx="7.500" cy="7" r="2.500" stroke="#999" />
        <path d="M8.500 10.500c2-1.500 3 0 0 3.500h3M13 10v4c3 0 3-4 0-4z" stroke="#5a86bd" />
      </Icon>
    </button>
    <span className="opacity-50">
      <Caret />
    </span>
    <span className="h-px w-4 bg-[#ccc]" />
    <button type="button" aria-label="Zoom in region">
      <Icon>
        <path d="M2 3h8v7H2z" fill="#97c189" stroke="#7fae70" />
        <circle cx="10" cy="9" r="2.500" fill="#eee" stroke="#888" />
        <path d="M12 11l2.500 2.500" stroke="#888" />
      </Icon>
    </button>
    <span className="opacity-50">
      <Caret />
    </span>
    <span className="h-1 w-1 self-end rounded-full border border-[#aaa]" />
  </div>
);

const DrawingArea = () => (
  <main className="flex min-w-0 flex-1 flex-col bg-white">
    <div className="flex h-[17px] shrink-0 bg-[#c9cbca]">
      <div className="flex w-[107px] items-center bg-white pl-[3px] pr-1">
        {icons.sheets}
        <span className="ml-1 flex-1 font-bold">Level 1</span>
        <button type="button" aria-label="Close Level 1">
          <Cross />
        </button>
      </div>
      <button type="button" aria-label="Open views" className="ml-auto mr-1 flex flex-col items-center justify-center gap-px">
        <span className="h-px w-[7px] bg-[#333]" />
        <Caret big />
      </button>
    </div>
    <div className="flex min-h-0 flex-1">
      <div className="relative min-w-0 flex-1 overflow-hidden">
        <FloorPlan />
        <NavigationBar />
      </div>
      <VerticalScroll className="mt-[182px] h-[14px]" />
    </div>
    <div className="flex h-[15px] shrink-0 items-center bg-[#f0f0f0]">
      <span className="w-[60px] whitespace-nowrap pl-[9px] text-[9px] text-[#222]">1/4" = 1'-0"</span>
      <div className="grid w-[184px] grid-cols-11 gap-x-px">
        {viewControls.map((name) => (
          <IconButton key={name} icon={name} className="h-[15px]" />
        ))}
      </div>
      <span className="ml-[2px]">
        <Chevron dir="left" />
      </span>
      <div className="flex flex-1 justify-center">
        <div className="h-3 w-[14px] bg-[#cdcdcd]" />
      </div>
      <Chevron dir="right" />
      <svg width={9} height={9} viewBox="0 0 9 9" fill="#b5b5b5" aria-hidden="true" className="ml-2 mr-px">
        <path d="M6 0h2v2H6zM3 3h2v2H3zM6 3h2v2H6zM0 6h2v2H0zM3 6h2v2H3zM6 6h2v2H6z" />
      </svg>
    </div>
  </main>
);

const StatusBar = () => (
  <footer className="flex h-5 shrink-0 items-center bg-[#cbcbcb] pt-px text-[#222]">
    <span className="w-[248px] whitespace-nowrap pl-px">Hold button and move mouse to Scroll the view. Hold</span>
    {icons.people}
    <div className="relative w-[169px]">
      <select aria-label="Workset" className="block h-[15px] w-full appearance-none bg-white" />
      <span className="pointer-events-none absolute right-[2px] top-1">
        <Chevron dir="down" stroke="#aaa" />
      </span>
    </div>
    <span className="ml-[6px] flex w-[43px] items-center">
      {icons.press}
      <span className="ml-[5px]">:0</span>
    </span>
    <IconButton icon="dialog" className="w-[18px]" />
    <IconButton icon="option" className="w-[18px]" />
    <div className="relative w-[169px]">
      <select aria-label="Design option" className="block h-[15px] w-full appearance-none bg-white px-[2px] leading-[15px] text-[#8a8a8a]">
        <option>Main Model</option>
      </select>
      <span className="pointer-events-none absolute right-[2px] top-1">
        <Chevron dir="down" stroke="#aaa" />
      </span>
    </div>
    <div className="ml-auto flex">
      {selectionTools.map((name) => (
        <IconButton key={name} icon={name} />
      ))}
    </div>
    <button type="button" className="mr-[51px] flex items-center">
      {icons.filter}:0
    </button>
  </footer>
);

const App = () => {
  const [tab, setTab] = useState("Annotate");

  return (
    <div className="flex h-screen flex-col bg-black px-[107px] pb-[61px] pt-[60px] font-['Open_Sans','Noto_Sans',sans-serif] text-[10px] text-[#333]">
      <TitleBar />
      <RibbonTabs active={tab} onSelect={setTab} />
      <Ribbon />
      <div className="h-[22px] shrink-0 bg-[#ececec]" />
      <div className="flex min-h-0 flex-1 border-y border-[#d0d0d0] bg-[#f0f0f0]">
        <aside className="flex w-[300px] shrink-0 flex-col">
          <PropertiesPanel />
          <ProjectBrowser />
        </aside>
        <div className="w-[3px] shrink-0 border-x border-[#dadada] bg-[#f0f0f0]" />
        <DrawingArea />
      </div>
      <StatusBar />
    </div>
  );
};

export default App;
